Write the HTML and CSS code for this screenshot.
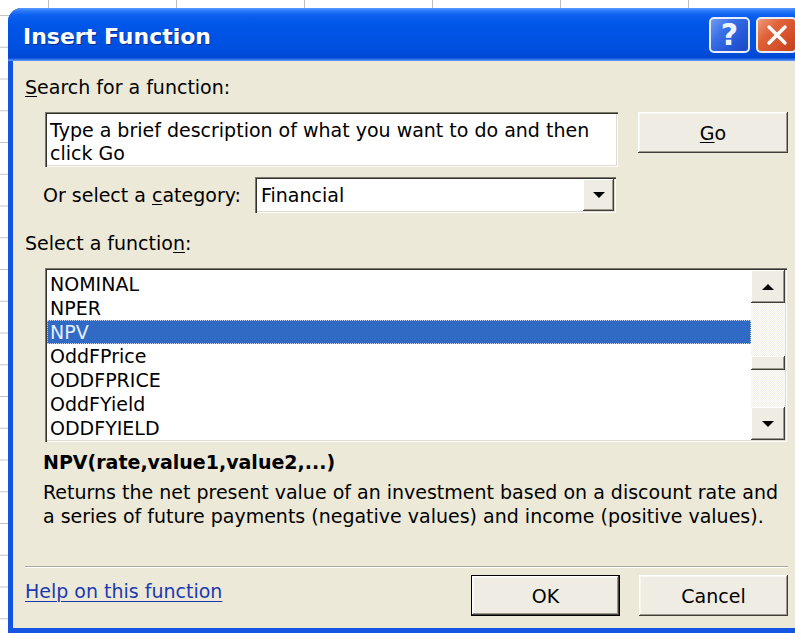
FILE: index.html
```html
<!DOCTYPE html>
<html lang="en">
<head>
<meta charset="utf-8">
<title>Insert Function</title>
<link rel="stylesheet" href="styles.css">
</head>
<body>
<div class="sheet">
  <section class="dialog">
    <header class="titlebar">
      <h1 class="title">Insert Function</h1>
      <div class="caption-buttons">
        <button class="cap-btn help" type="button">?</button>
        <button class="cap-btn close" type="button">
          <svg width="22" height="22" viewBox="0 0 22 22">
            <path d="M3 3 L19 19 M19 3 L3 19" stroke="#fff" stroke-width="3.4" stroke-linecap="round" fill="none"/>
          </svg>
        </button>
      </div>
    </header>

    <div class="client">
      <div class="label search-label"><u>S</u>earch for a function:</div>

      <div class="search-row">
        <div class="textbox">Type a brief description of what you want to do and then click Go</div>
        <button class="btn go" type="button"><u>G</u>o</button>
      </div>

      <div class="category-row">
        <span class="label category-label">Or select a <u>c</u>ategory:</span>
        <div class="combo">
          <span class="combo-value">Financial</span>
          <span class="drop-btn"><span class="arrow down"></span></span>
        </div>
      </div>

      <div class="label select-label">Select a functio<u>n</u>:</div>

      <div class="listbox">
        <ul class="items">
          <li>NOMINAL</li>
          <li>NPER</li>
          <li class="selected">NPV</li>
          <li>OddFPrice</li>
          <li>ODDFPRICE</li>
          <li>OddFYield</li>
          <li>ODDFYIELD</li>
        </ul>
        <div class="scrollbar">
          <span class="sb-btn"><span class="arrow up"></span></span>
          <span class="track"><span class="thumb"></span></span>
          <span class="sb-btn"><span class="arrow down"></span></span>
        </div>
      </div>

      <div class="signature">NPV(rate,value1,value2,...)</div>
      <p class="desc">Returns the net present value of an investment based on a discount rate and<br>a series of future payments (negative values) and income (positive values).</p>

      <div class="sep"></div>

      <div class="footer">
        <a class="help-link" href="#">Help on this function</a>
        <button class="btn ok" type="button">OK</button>
        <button class="btn cancel" type="button">Cancel</button>
      </div>
    </div>
  </section>
</div>
</body>
</html>
```

FILE: styles.css
```css
* { box-sizing: border-box; }

html, body {
  margin: 0;
  height: 100%;
}

/* worksheet grid behind the dialog */
body {
  overflow: hidden;
  background-color: #fff;
  background-image:
    linear-gradient(to right, #bdbdbd 1px, transparent 1px),
    linear-gradient(to bottom, #c4c4c4 1px, transparent 1px);
  background-size: 128px 100%, 100% 31.75px;
  background-position: 48px 0, 0 15px;
  font-family: "DejaVu Sans", sans-serif;
  font-size: 19px;
  color: #000;
}

.sheet {
  padding: 8px 0 0 8px;
}

.dialog {
  width: 797px;
  height: 625px;
  display: flex;
  flex-direction: column;
  border-radius: 14px 14px 0 0;
  overflow: hidden;
  background: #0b4bdc;
}

/* ---------- title bar ---------- */
.titlebar {
  flex: none;
  height: 53px;
  display: flex;
  align-items: flex-start;
  padding: 9px 8px 0 15px;
  background: linear-gradient(#5a9bff 0, #2a78f8 3px, #0d60f0 7px, #0056e8 30%, #0050e0 75%, #0047d4 94%, #2f74ec 97%, #6a9cf2 100%);
}

.title {
  flex: 1;
  margin: 7px 0 0;
  font: bold 22px/26px "DejaVu Sans", sans-serif;
  color: #fff;
  text-shadow: 1px 1px 0 #0a2a8c;
}

.caption-buttons {
  display: flex;
  gap: 6px;
}

.cap-btn {
  width: 41px;
  height: 36px;
  padding: 0;
  border: 2px solid #e8eefc;
  border-radius: 5px;
  display: flex;
  align-items: center;
  justify-content: center;
  cursor: default;
}

.help {
  background: linear-gradient(135deg, #6f9cf6 0%, #3b6fe6 35%, #2457d6 70%, #1d48c4 100%);
  color: #eef3ff;
  font: bold 30px/1 "DejaVu Sans", sans-serif;
}

.close {
  background: linear-gradient(135deg, #f09a7c 0%, #e0633a 35%, #d4502a 70%, #c3411e 100%);
}

/* ---------- client area ---------- */
.client {
  flex: 1;
  display: flex;
  flex-direction: column;
  background: #ece9d8;
  border-left: 5px solid #1454e2;
  border-right: 5px solid #1454e2;
  border-bottom: 5px solid #1454e2;
  padding: 0 12px;
}

.label {
  line-height: 22px;
  white-space: nowrap;
}

u { text-decoration-thickness: 1px; text-underline-offset: 2px; }

.search-label { margin-top: 15px; }

.search-row {
  margin-top: 14px;
  display: flex;
  align-items: flex-start;
}

/* sunken white field */
.textbox,
.combo,
.listbox {
  background: #fff;
  box-shadow:
    inset 1px 1px #7a776b,
    inset 2px 2px #33322d,
    inset -1px -1px #fdfdfb,
    inset -2px -2px #dedbd0;
}

.textbox {
  margin-left: 20px;
  width: 573px;
  height: 55px;
  padding: 7px 5px 0;
  line-height: 23px;
}

/* raised push button */
.btn {
  height: 41px;
  padding: 0;
  border: none;
  background: #efede3;
  font: 19px/22px "DejaVu Sans", sans-serif;
  color: #000;
  box-shadow:
    inset -1px -1px #3f3e38,
    inset 1px 1px #fff,
    inset -2px -2px #9c998c,
    inset 2px 2px #f7f6f1;
  cursor: default;
}

.go {
  width: 150px;
  margin-left: auto;
}

.category-row {
  margin-top: 10px;
  height: 36px;
  display: flex;
  align-items: center;
  padding-left: 18px;
}

.category-label { flex: 0 0 212px; }

.combo {
  width: 361px;
  height: 36px;
  display: flex;
  align-items: stretch;
  padding: 2px;
}

.combo-value {
  flex: 1;
  padding-left: 4px;
  display: flex;
  align-items: center;
  line-height: 22px;
}

.drop-btn,
.sb-btn {
  display: flex;
  align-items: center;
  justify-content: center;
  background: #efede3;
  box-shadow:
    inset -1px -1px #3f3e38,
    inset 1px 1px #fff,
    inset -2px -2px #9c998c;
}

.drop-btn { width: 31px; }

.arrow {
  width: 0;
  height: 0;
  border-left: 6px solid transparent;
  border-right: 6px solid transparent;
}

.arrow.down { border-top: 6px solid #000; }
.arrow.up { border-bottom: 6px solid #000; }

.select-label { margin-top: 19px; }

/* ---------- function list ---------- */
.listbox {
  margin-top: 14px;
  margin-left: 20px;
  width: 742px;
  height: 174px;
  padding: 2px;
  display: flex;
}

.items {
  flex: 1;
  list-style: none;
  margin: 0;
  padding: 2px 0 0;
  overflow: hidden;
}

.items li {
  height: 24px;
  line-height: 25px;
  padding-left: 3px;
  white-space: nowrap;
}

.items li.selected {
  background: #316ac5;
  color: #e4edff;
  outline: 1px dotted #c9d6ef;
  outline-offset: -1px;
}

.scrollbar {
  flex: 0 0 34px;
  display: flex;
  flex-direction: column;
}

.sb-btn {
  height: 33px;
  flex: none;
}

/* dithered scroll track */
.track {
  flex: 1;
  display: block;
  background-color: #fff;
  background-image: conic-gradient(#f1efe6 25%, #fff 0 50%, #f1efe6 0 75%, #fff 0);
  background-size: 2px 2px;
}

.thumb {
  display: block;
  margin-top: 53px;
  height: 14px;
  background: #efede3;
  box-shadow:
    inset -1px -1px #3f3e38,
    inset 1px 1px #fff,
    inset -2px -2px #9c998c;
}

/* ---------- description ---------- */
.signature {
  margin-top: 8px;
  padding-left: 18px;
  font-weight: bold;
  line-height: 24px;
}

.desc {
  margin: 6px 0 0;
  padding-left: 18px;
  line-height: 24px;
  white-space: nowrap;
}

.sep {
  margin-top: 38px;
  height: 2px;
  border-top: 1px solid #aca899;
  border-bottom: 1px solid #fff;
}

.footer {
  margin-top: 7px;
  display: flex;
  align-items: flex-start;
}

.help-link {
  margin-top: 5px;
  line-height: 22px;
  color: #1c3ab0;
  text-decoration: underline;
  text-decoration-thickness: 1px;
  text-underline-offset: 3px;
}

.ok {
  width: 149px;
  margin-left: auto;
  border: 1px solid #000;
}

.cancel {
  width: 149px;
  margin-left: 19px;
}
```
